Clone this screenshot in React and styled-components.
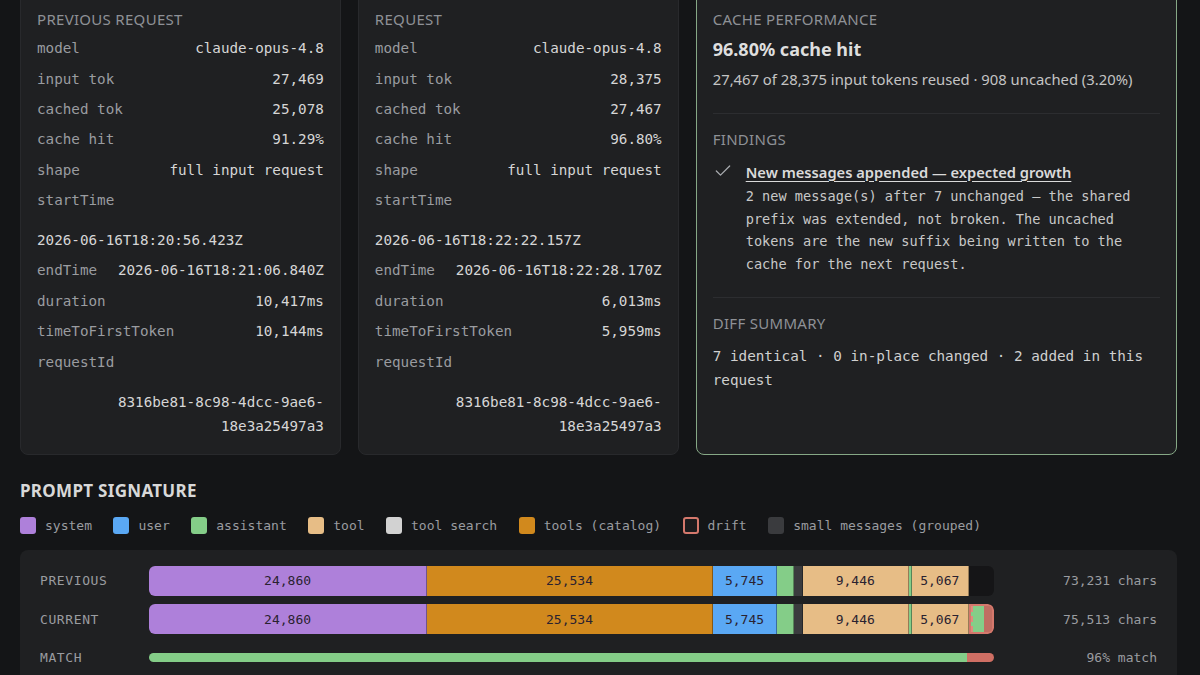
import React from "react";
import styled, { createGlobalStyle } from "styled-components";
import { Check } from "lucide-react";

const mono = `"DejaVu Sans Mono", "Liberation Mono", monospace`;
const sans = `"Noto Sans", "Open Sans", sans-serif`;

const color = {
  page: "#141517",
  card: "#1f2022",
  border: "#2c2d30",
  label: "#9a9ca0",
  value: "#d6d6d6",
  heading: "#8e9196",
  system: "#ae80da",
  user: "#5aa8f4",
  assistant: "#84cd88",
  tool: "#e7bd86",
  toolSearch: "#d2d2d2",
  catalog: "#d1891d",
  drift: "#d4786c",
  small: "#3a3b3e",
};

const GlobalStyle = createGlobalStyle`
  html, body {
    margin: 0;
    background: ${color.page};
    overflow: hidden;
  }
  * { box-sizing: border-box; }
`;

const Page = styled.div`
  width: 1200px;
  height: 675px;
  overflow: hidden;
  background: ${color.page};
  padding: 0 23px 0 20px;
  font-family: ${sans};
`;

// the view is scrolled a little: card tops sit just above the fold
const Scroller = styled.div`
  margin-top: -8px;
`;

const Cards = styled.div`
  display: grid;
  grid-template-columns: 2fr 2fr 3fr;
  gap: 17px;
`;

const Card = styled.div`
  background: ${color.card};
  border: 1px solid ${(p) => (p.$accent ? "#86a886" : "#28292c")};
  border-radius: 8px;
  padding: 16px 16px 13px;
`;

const CardTitle = styled.div`
  font-family: ${sans};
  font-size: 15px;
  line-height: 20px;
  letter-spacing: 0.3px;
  text-transform: uppercase;
  color: ${color.heading};
  margin-bottom: 4px;
`;

const Row = styled.div`
  display: flex;
  flex-wrap: wrap;
  justify-content: space-between;
  gap: 16px 12px;
  padding: 3.2px 0;
  font-family: ${mono};
  font-size: 14.25px;
  line-height: 24px;
`;

const Key = styled.span`
  color: ${color.label};
`;

const Val = styled.span`
  color: ${color.value};
  text-align: right;
  overflow-wrap: anywhere;
`;

const Big = styled.div`
  font-size: 18px;
  font-weight: 700;
  line-height: 26px;
  color: #dedede;
  margin-top: 7px;
`;

const Sub = styled.div`
  font-size: 14.8px;
  line-height: 22px;
  color: #c4c4c4;
  margin-top: 6px;
`;

const Section = styled.div`
  border-top: 1px solid ${color.border};
  margin-top: ${(p) => p.$gap || 23}px;
  padding-top: 15px;
`;

const Finding = styled.div`
  display: grid;
  grid-template-columns: 20px 1fr;
  column-gap: 13px;
  margin-top: 12px;
  color: #a9acb0;
`;

const FindingTitle = styled.div`
  font-size: 14.7px;
  font-weight: 600;
  line-height: 22px;
  color: #dadada;
  text-decoration: underline;
  text-underline-offset: 3px;
`;

const FindingBody = styled.div`
  font-family: ${mono};
  font-size: 13.6px;
  line-height: 22.7px;
  color: #c8c8c8;
  margin-top: 2px;
`;

const Summary = styled.div`
  font-family: ${mono};
  font-size: 14.3px;
  line-height: 24px;
  color: #d0d0d0;
  margin-top: 11px;
`;

const SectionHead = styled.h2`
  margin: 25px 0 0;
  font-family: ${sans};
  font-size: 17px;
  font-weight: 700;
  line-height: 22px;
  letter-spacing: 0.3px;
  color: #d8d8d8;
  text-transform: uppercase;
`;

const Legend = styled.div`
  display: flex;
  gap: 21.5px;
  margin-top: 15px;
  font-family: ${mono};
  font-size: 13px;
  line-height: 18px;
  color: ${color.label};
`;

const LegendItem = styled.div`
  display: flex;
  align-items: center;
  gap: 9px;
`;

const Swatch = styled.span`
  width: 16px;
  height: 17px;
  border-radius: 3px;
  background: ${(p) => p.$c};
  border: ${(p) => (p.$outline ? `2px solid ${color.drift}` : "none")};
`;

const Panel = styled.div`
  margin-top: 15px;
  background: ${color.card};
  border-radius: 8px;
  padding: 16px 20px;
  display: grid;
  grid-template-columns: 109px 1fr 163px;
  grid-auto-rows: 30px;
  row-gap: 8.5px;
  align-items: center;
`;

const RowLabel = styled.div`
  font-family: ${mono};
  font-size: 13px;
  letter-spacing: 0.6px;
  color: ${color.label};
`;

const Track = styled.div`
  display: flex;
  height: ${(p) => (p.$thin ? "9px" : "30px")};
  border-radius: 6px;
  overflow: hidden;
  background: #151517;
`;

const Seg = styled.div`
  flex: none;
  display: flex;
  align-items: center;
  justify-content: center;
  background: ${(p) => p.$c};
  border-right: 1px solid rgba(0, 0, 0, 0.35);
  font-family: ${mono};
  font-size: 13px;
  color: #2a2230;
  overflow: hidden;
  white-space: nowrap;
`;

const Drift = styled.div`
  flex: none;
  display: flex;
  border: 2px solid ${color.drift};
  border-radius: 0 6px 6px 0;
  background: #c06d62;
`;

const DriftFill = styled.div`
  width: 60%;
  background: ${color.assistant};
  border-left: 2px dashed #e08a7c;
`;

const RowMeta = styled.div`
  font-family: ${mono};
  font-size: 13px;
  color: ${color.label};
  text-align: right;
`;

const prev = [
  ["PREVIOUS REQUEST"],
  ["model", "claude-opus-4.8"],
  ["input tok", "27,469"],
  ["cached tok", "25,078"],
  ["cache hit", "91.29%"],
  ["shape", "full input request"],
  ["startTime", "2026-06-16T18:20:56.423Z"],
  ["endTime", "2026-06-16T18:21:06.840Z"],
  ["duration", "10,417ms"],
  ["timeToFirstToken", "10,144ms"],
  ["requestId", "8316be81-8c98-4dcc-9ae6-18e3a25497a3"],
];

const cur = [
  ["REQUEST"],
  ["model", "claude-opus-4.8"],
  ["input tok", "28,375"],
  ["cached tok", "27,467"],
  ["cache hit", "96.80%"],
  ["shape", "full input request"],
  ["startTime", "2026-06-16T18:22:22.157Z"],
  ["endTime", "2026-06-16T18:22:28.170Z"],
  ["duration", "6,013ms"],
  ["timeToFirstToken", "5,959ms"],
  ["requestId", "8316be81-8c98-4dcc-9ae6-18e3a25497a3"],
];

const legend = [
  ["system", color.system],
  ["user", color.user],
  ["assistant", color.assistant],
  ["tool", color.tool],
  ["tool search", color.toolSearch],
  ["tools (catalog)", color.catalog],
  ["drift", "#1b1b1d", true],
  ["small messages (grouped)", color.small],
];

const MAX = 75513;
const segments = [
  [24860, color.system, "24,860"],
  [25534, color.catalog, "25,534"],
  [5745, color.user, "5,745"],
  [1500, color.assistant],
  [800, color.small],
  [9446, color.tool, "9,446"],
  [300, color.assistant],
  [5067, color.tool, "5,067"],
];
const pct = (n) => `${(n / MAX) * 100}%`;

function InfoCard({ rows }) {
  const [[title], ...rest] = rows;
  return (
    <Card>
      <CardTitle>{title}</CardTitle>
      {rest.map(([k, v]) => (
        <Row key={k}>
          <Key>{k}</Key>
          <Val>{v}</Val>
        </Row>
      ))}
    </Card>
  );
}

function Bar({ drift }) {
  return (
    <Track>
      {segments.map(([n, c, label], i) => (
        <Seg key={i} $c={c} style={{ width: pct(n) }}>
          {label}
        </Seg>
      ))}
      {drift && (
        <Drift style={{ width: pct(MAX - 73231) }}>
          <DriftFill />
        </Drift>
      )}
    </Track>
  );
}

export default function App() {
  return (
    <Page>
      <GlobalStyle />
      <Scroller>
        <Cards>
          <InfoCard rows={prev} />
          <InfoCard rows={cur} />
          <Card $accent>
            <CardTitle>Cache performance</CardTitle>
            <Big>96.80% cache hit</Big>
            <Sub>27,467 of 28,375 input tokens reused · 908 uncached (3.20%)</Sub>
            <Section>
              <CardTitle>Findings</CardTitle>
              <Finding>
                <Check size={20} strokeWidth={1.5} />
                <div>
                  <FindingTitle>New messages appended — expected growth</FindingTitle>
                  <FindingBody>
                    2 new message(s) after 7 unchanged — the shared prefix was
                    extended, not broken. The uncached tokens are the new suffix
                    being written to the cache for the next request.
                  </FindingBody>
                </div>
              </Finding>
            </Section>
            <Section $gap={21}>
              <CardTitle>Diff summary</CardTitle>
              <Summary>
                7 identical · 0 in-place changed · 2 added in this request
              </Summary>
            </Section>
          </Card>
        </Cards>

        <SectionHead>Prompt signature</SectionHead>
        <Legend>
          {legend.map(([name, c, outline]) => (
            <LegendItem key={name}>
              <Swatch $c={c} $outline={outline} />
              {name}
            </LegendItem>
          ))}
        </Legend>

        <Panel>
          <RowLabel>PREVIOUS</RowLabel>
          <Bar />
          <RowMeta>73,231 chars</RowMeta>
          <RowLabel>CURRENT</RowLabel>
          <Bar drift />
          <RowMeta>75,513 chars</RowMeta>
          <RowLabel>MATCH</RowLabel>
          <Track $thin>
            <Seg $c={color.assistant} style={{ width: "96.8%", borderRight: "none" }} />
            <Seg $c="#cf6f64" style={{ flex: 1, borderRight: "none" }} />
          </Track>
          <RowMeta>96% match</RowMeta>
        </Panel>
      </Scroller>
    </Page>
  );
}
